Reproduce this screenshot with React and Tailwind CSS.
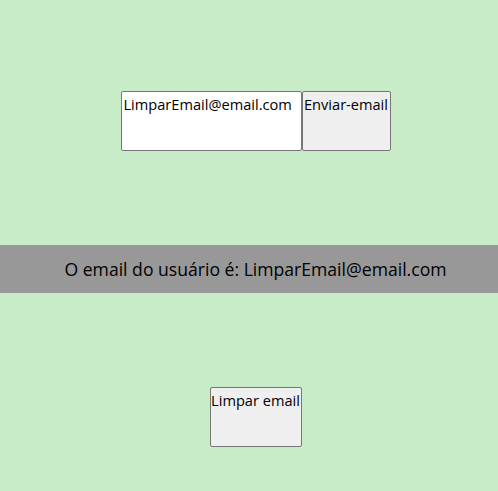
export default function App() {
  return (
    <div className="min-h-[491px] bg-[#c8ebc8] pl-[13px] font-['Open_Sans',sans-serif] text-black">
      <div className="flex justify-center pt-[91px]">
        <div className="h-[60px] w-[181px] rounded-[2px] border border-[#767676] bg-white px-[2px] pt-[2px] text-[14.6px] leading-[20px]">
          LimparEmail@email.com
        </div>
        <button className="flex h-[60px] w-[89px] items-start justify-center whitespace-nowrap rounded-[2px] border border-[#767676] bg-[#efefef] px-0 pt-[2px] text-[14.6px] leading-[20px]">
          Enviar-email
        </button>
      </div>
      <div className="-ml-[13px] mt-[94px] flex h-[48px] items-center justify-center bg-[#989898] pl-[13px] text-[17.6px]">
        O email do usuário é: LimparEmail@email.com
      </div>
      <div className="flex justify-center pt-[94px]">
        <button className="flex h-[60px] w-[92px] items-start justify-center whitespace-nowrap rounded-[2px] border border-[#767676] bg-[#efefef] px-0 pt-[2px] text-[14.6px] leading-[20px]">
          Limpar email
        </button>
      </div>
    </div>
  );
}
